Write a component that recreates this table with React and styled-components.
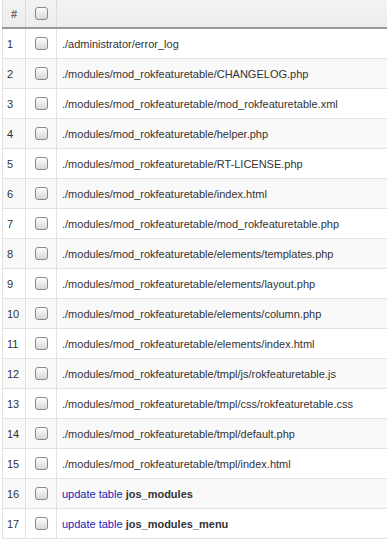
import React from 'react';
import styled, { createGlobalStyle } from 'styled-components';

const GlobalStyle = createGlobalStyle`
   html, body {
      margin: 0;
      padding: 0;
      background: #fff;
   }
   body {
      font-family: "Liberation Sans", Arial, Helvetica, sans-serif;
      font-size: 11px;
      color: #333;
   }
`;

const files = [
   './administrator/error_log',
   './modules/mod_rokfeaturetable/CHANGELOG.php',
   './modules/mod_rokfeaturetable/mod_rokfeaturetable.xml',
   './modules/mod_rokfeaturetable/helper.php',
   './modules/mod_rokfeaturetable/RT-LICENSE.php',
   './modules/mod_rokfeaturetable/index.html',
   './modules/mod_rokfeaturetable/mod_rokfeaturetable.php',
   './modules/mod_rokfeaturetable/elements/templates.php',
   './modules/mod_rokfeaturetable/elements/layout.php',
   './modules/mod_rokfeaturetable/elements/column.php',
   './modules/mod_rokfeaturetable/elements/index.html',
   './modules/mod_rokfeaturetable/tmpl/js/rokfeaturetable.js',
   './modules/mod_rokfeaturetable/tmpl/css/rokfeaturetable.css',
   './modules/mod_rokfeaturetable/tmpl/default.php',
   './modules/mod_rokfeaturetable/tmpl/index.html',
];

const tables = ['jos_modules', 'jos_modules_menu'];

export default function App() {
   const rows = [
      ...files.map((f) => ({ type: 'file', text: f })),
      ...tables.map((t) => ({ type: 'table', text: t })),
   ];

   return (
      <>
         <GlobalStyle />
         <Wrap>
            <Table>
               <thead>
                  <tr>
                     <Th>#</Th>
                     <Th>
                        <Check />
                     </Th>
                     <Th />
                  </tr>
               </thead>
               <tbody>
                  {rows.map((row, i) => (
                     <Row key={i} $even={i % 2 === 1}>
                        <Num>{i + 1}</Num>
                        <CheckCell>
                           <Check />
                        </CheckCell>
                        <Td>
                           {row.type === 'file' ? (
                              row.text
                           ) : (
                              <>
                                 <Link>update table</Link> <b>{row.text}</b>
                              </>
                           )}
                        </Td>
                     </Row>
                  ))}
               </tbody>
            </Table>
         </Wrap>
      </>
   );
}

const Wrap = styled.div`
   padding: 0 0 0 2px;
`;

const Table = styled.table`
   width: 100%;
   border-collapse: collapse;
   table-layout: fixed;
`;

const Th = styled.th`
   height: 27px;
   padding: 0;
   background: linear-gradient(#f3f3f3, #ececec);
   border-left: 1px solid #dcdcdc;
   border-right: 1px solid #dcdcdc;
   border-bottom: 2px solid #9a9a9a;
   color: #666;
   font-size: 11px;
   font-weight: bold;
   text-align: center;
   vertical-align: middle;

   &:first-child {
      width: 22px;
   }
   &:nth-child(2) {
      width: 30px;
   }
   &:last-child {
      border-right: none;
   }
`;

const Row = styled.tr`
   background: ${(p) => (p.$even ? '#f9f9f9' : '#fff')};
`;

const Td = styled.td`
   height: 29px;
   padding: 0 0 0 5px;
   border: 1px solid #e2e2e2;
   border-top: none;
   font-size: 11px;
   color: #333;
   white-space: nowrap;
   overflow: hidden;
   vertical-align: middle;

   &:last-child {
      border-right: none;
   }

   b {
      color: #333;
   }
`;

const Num = styled(Td)`
   padding: 0 0 0 4px;
`;

const CheckCell = styled(Td)`
   padding: 0;
   text-align: center;
`;

const Check = styled.span`
   display: inline-block;
   width: 11px;
   height: 11px;
   vertical-align: middle;
   border: 1px solid #8a8a8a;
   border-radius: 3px;
   background: linear-gradient(#fdfdfd, #d8d8d8);
   box-shadow: inset 0 1px 0 #fff;
`;

const Link = styled.a`
   color: #1a1ab8;
   text-decoration: none;
`;
